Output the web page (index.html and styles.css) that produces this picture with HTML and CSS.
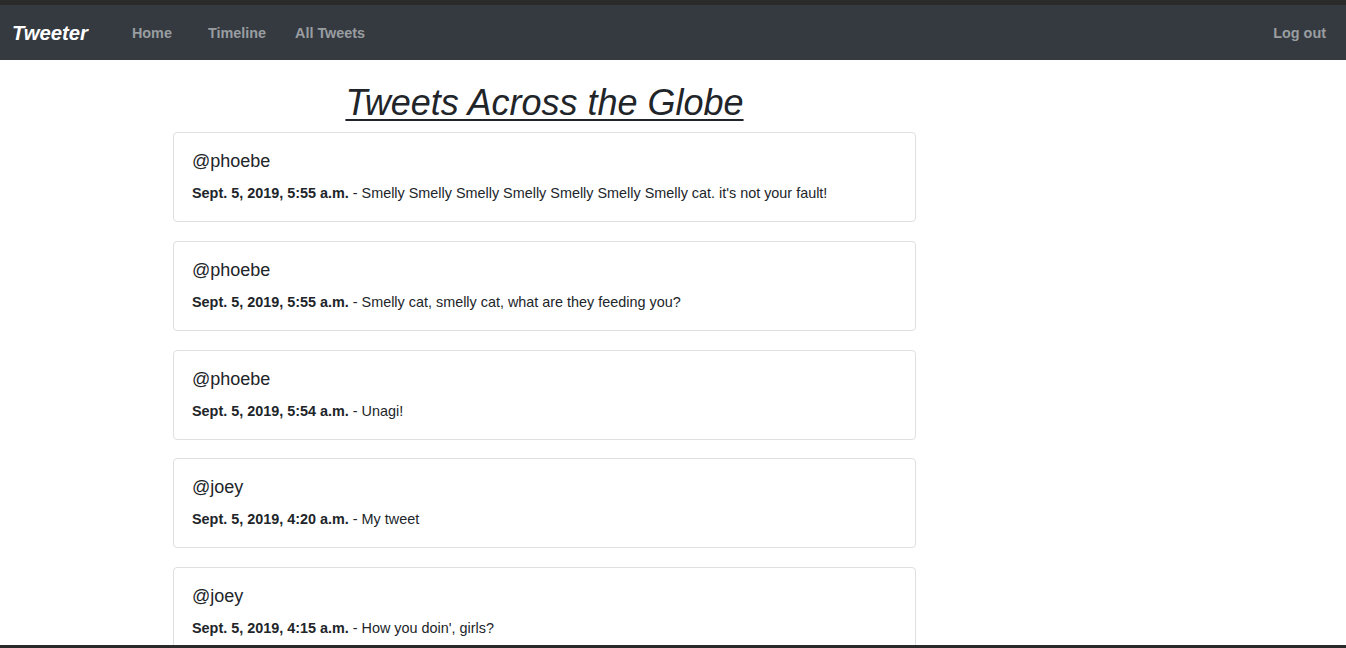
FILE: index.html
```html
<!DOCTYPE html>
<html lang="en">
<head>
<meta charset="utf-8">
<title>Tweeter</title>
<link rel="stylesheet" href="styles.css">
</head>
<body>
<div class="topband"></div>
<nav class="navbar">
  <a class="brand" href="#">Tweeter</a>
  <ul class="nav-links">
    <li><a href="#" class="nav-link home">Home</a></li>
    <li><a href="#" class="nav-link timeline">Timeline</a></li>
    <li><a href="#" class="nav-link">All Tweets</a></li>
  </ul>
  <a href="#" class="nav-link logout">Log out</a>
</nav>
<main class="content">
  <h1 class="title">Tweets Across the Globe</h1>
  <div class="card">
    <h5 class="user">@phoebe</h5>
    <p class="tweet"><b>Sept. 5, 2019, 5:55 a.m.</b> - Smelly Smelly Smelly Smelly Smelly Smelly Smelly cat. it's not your fault!</p>
  </div>
  <div class="card">
    <h5 class="user">@phoebe</h5>
    <p class="tweet"><b>Sept. 5, 2019, 5:55 a.m.</b> - Smelly cat, smelly cat, what are they feeding you?</p>
  </div>
  <div class="card">
    <h5 class="user">@phoebe</h5>
    <p class="tweet"><b>Sept. 5, 2019, 5:54 a.m.</b> - Unagi!</p>
  </div>
  <div class="card">
    <h5 class="user">@joey</h5>
    <p class="tweet"><b>Sept. 5, 2019, 4:20 a.m.</b> - My tweet</p>
  </div>
  <div class="card">
    <h5 class="user">@joey</h5>
    <p class="tweet"><b>Sept. 5, 2019, 4:15 a.m.</b> - How you doin', girls?</p>
  </div>
</main>
<div class="bottomband"></div>
</body>
</html>
```
FILE: styles.css
```css
html, body {
  margin: 0;
  padding: 0;
}
body {
  font-family: "Liberation Sans", Arial, sans-serif;
  color: #212529;
  background: #fff;
  overflow: hidden;
  height: 648px;
}
a { text-decoration: none; }

.topband {
  height: 5px;
  background: #2b2b2b;
}

.navbar {
  height: 55px;
  background: #343a40;
  display: flex;
  align-items: center;
  padding: 0 20px 0 12px;
  box-sizing: border-box;
}
.brand {
  color: #fff;
  font-size: 20.3px;
  font-weight: bold;
  font-style: italic;
  margin-right: 30px;
  padding-top: 2px;
}
.nav-links {
  list-style: none;
  display: flex;
  margin: 0;
  padding: 0;
  flex: 1;
}
.nav-link {
  color: #9a9da0;
  font-weight: bold;
  font-size: 14.4px;
  padding: 8px 14px;
  display: block;
}
.nav-link.home { margin-right: 8px; }
.nav-link.timeline { margin-right: 1px; }
.logout { padding-right: 0; }

.content {
  width: 743px;
  margin-left: 173px;
}
.title {
  margin: 21px 0 8px;
  text-align: center;
  font-size: 36px;
  line-height: 43px;
  font-weight: normal;
  font-style: italic;
  text-decoration: underline;
  text-decoration-thickness: 2px;
  text-underline-offset: 4px;
}
.card {
  border: 1px solid #dfdfdf;
  border-radius: 4px;
  height: 90px;
  box-sizing: border-box;
  padding: 17px 18px 18px;
  margin-bottom: 18.75px;
}
.user {
  margin: 0 0 11px;
  font-size: 18px;
  font-weight: normal;
  line-height: 22px;
}
.tweet {
  margin: 0;
  font-size: 14.4px;
  line-height: 20px;
}
.bottomband {
  position: fixed;
  left: 0;
  right: 0;
  bottom: 0;
  height: 3px;
  background: #2a2a2a;
}
```
